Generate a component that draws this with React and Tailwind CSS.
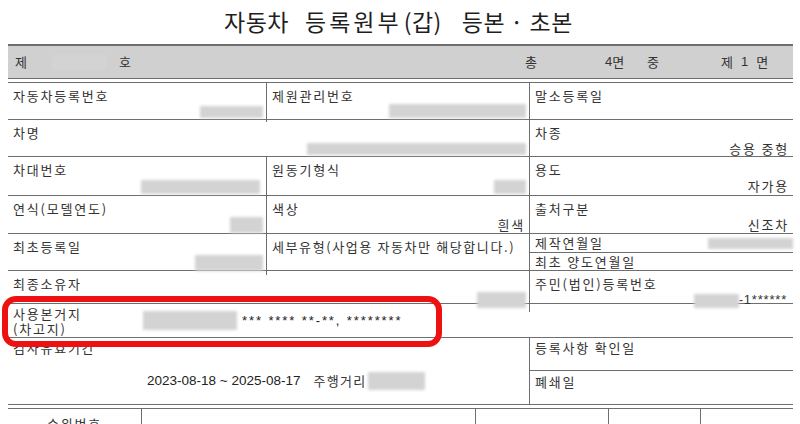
import React from "react";

const ln = "border-[#6e6e6e]";

function Blur({ w, h = 13, className = "" }) {
  return <div className={`bg-[#d3d3d3] blur-[1.5px] ${className}`} style={{ width: w, height: h }} />;
}

function Cell({ label, children, className = "" }) {
  return (
    <div className={`flex flex-col justify-between px-[5px] pt-[5px] pb-[4px] ${className}`}>
      <div className="leading-[16px]">{label}</div>
      <div className="flex items-end justify-end leading-[16px]">{children}</div>
    </div>
  );
}

export default function App() {
  return (
    <div className="h-[424px] w-[800px] overflow-hidden bg-white font-['Noto_Sans_CJK_KR',sans-serif] text-[13px] text-[#333]">
      {/* title */}
      <div className="flex h-[44px] items-center pb-[1px] pl-[224px] text-[23px] tracking-[0.5px] text-[#1e1e1e]">
        <span>자동차</span>
        <span className="ml-[16px] tracking-[3px]">등록원부</span>
        <span className="ml-[2px]">(갑)</span>
        <span className="ml-[20px]">등본</span>
        <span className="ml-[5px]">·</span>
        <span className="ml-[6px]">초본</span>
      </div>

      <div className="ml-[8px] w-[785px]">
        {/* header bar */}
        <div className={`flex h-[35px] items-center border-t-2 border-b bg-[#d0d0d0] ${ln}`}>
          <span className="ml-[7px]">제</span>
          <Blur w={55} h={15} className="ml-[25px]" />
          <span className="ml-[12px]">호</span>
          <span className="ml-[394px]">총</span>
          <span className="ml-[68px] font-['Liberation_Sans',sans-serif]">4</span>
          <span>면</span>
          <span className="ml-[23px]">중</span>
          <span className="ml-[62px]">제</span>
          <span className="ml-[8px] font-['Liberation_Sans',sans-serif]">1</span>
          <span className="ml-[8px]">면</span>
        </div>
        <div className={`h-[4px] border-b ${ln}`} />

        {/* row 1 */}
        <div className={`grid h-[37px] grid-cols-[259px_263px_263px] border-b tracking-[1.8px] ${ln}`}>
          <Cell label="자동차등록번호" className={`border-r pr-[3px] ${ln}`}>
            <Blur w={63} h={12} />
          </Cell>
          <Cell label="제원관리번호" className={`border-r pr-[3px] ${ln}`}>
            <Blur w={137} h={14} />
          </Cell>
          <Cell label="말소등록일" />
        </div>

        {/* row 2 */}
        <div className={`grid h-[37px] grid-cols-[259px_263px_263px] border-b tracking-[1.8px] ${ln}`}>
          <Cell label="차명" className={`col-span-2 border-r pr-[3px] ${ln}`}>
            <Blur w={219} h={12} className="mb-[2px]" />
          </Cell>
          <Cell label="차종" className="pr-[4px]">승용 중형</Cell>
        </div>

        {/* row 3 */}
        <div className={`grid h-[39px] grid-cols-[259px_263px_263px] border-b tracking-[1.8px] ${ln}`}>
          <Cell label="차대번호" className={`border-r pr-[6px] ${ln}`}>
            <Blur w={119} h={14} />
          </Cell>
          <Cell label="원동기형식" className={`border-r pr-[3px] ${ln}`}>
            <Blur w={32} h={14} />
          </Cell>
          <Cell label="용도" className="pr-[4px]">자가용</Cell>
        </div>

        {/* row 4 */}
        <div className={`grid h-[38px] grid-cols-[259px_263px_263px] border-b tracking-[1.8px] ${ln}`}>
          <Cell label="연식(모델연도)" className={`border-r pr-[3px] ${ln}`}>
            <Blur w={33} h={16} />
          </Cell>
          <Cell label="색상" className={`border-r pr-[4px] ${ln}`}>흰색</Cell>
          <Cell label="출처구분" className="pr-[4px]">신조차</Cell>
        </div>

        {/* row 5 */}
        <div className={`grid h-[37px] grid-cols-[259px_263px_263px] border-b tracking-[1.8px] ${ln}`}>
          <Cell label="최초등록일" className={`border-r pr-[3px] pb-[2px] ${ln}`}>
            <Blur w={68} h={16} />
          </Cell>
          <Cell label="세부유형(사업용 자동차만 해당합니다.)" className={`border-r pt-[2px] tracking-[1.6px] ${ln}`} />
          <div className="flex flex-col">
            <div className={`flex h-[19px] items-center justify-between border-b pl-[5px] ${ln}`}>
              <span className="leading-[16px]">제작연월일</span>
              <Blur w={85} h={11} />
            </div>
            <div className="flex h-[17px] items-center pl-[5px] leading-[16px]">최초 양도연월일</div>
          </div>
        </div>

        {/* row 6 */}
        <div className={`grid h-[33px] grid-cols-[259px_263px_263px] border-b tracking-[1.8px] ${ln}`}>
          <Cell label="최종소유자" className={`col-span-2 border-r pt-[2px] pr-[3px] pb-[2px] ${ln}`}>
            <Blur w={49} h={16} />
          </Cell>
          <Cell label="주민(법인)등록번호" className="pt-[2px] pb-[1px] pr-[6px]">
            <Blur w={45} h={14} />
            <span className="font-['Liberation_Sans',sans-serif] text-[13px] tracking-[0.8px]">-1******</span>
          </Cell>
        </div>

        {/* row 7 */}
        <div className={`relative flex h-[34px] items-center border-b tracking-[1.8px] ${ln}`}>
          <div className="w-[135px] pl-[5px] leading-[15px]">
            <div>사용본거지</div>
            <div>(차고지)</div>
          </div>
          <Blur w={94} h={19} />
          <span className="ml-[5px] font-['Liberation_Sans',sans-serif] text-[13px] tracking-[1.9px] text-[#222]">
            *** **** **-**, ********
          </span>
          <div className="absolute left-[-6px] top-[-8px] z-10 h-[51px] w-[440px] rounded-[14px] border-[6px] border-[#ee1111]" />
        </div>

        {/* row 8 */}
        <div className={`grid h-[67px] grid-cols-[259px_263px_263px] border-b tracking-[1.8px] ${ln}`}>
          <div className={`col-span-2 flex flex-col border-r pl-[5px] pt-[2px] ${ln}`}>
            <div className="leading-[16px]">검사유효기간</div>
            <div className="mt-[15px] flex items-center pl-[134px]">
              <span className="font-['Liberation_Sans',sans-serif] text-[13.5px] tracking-normal text-[#222]">
                2023-08-18 ~ 2025-08-17
              </span>
              <span className="ml-[13px] tracking-[1.3px]">주행거리</span>
              <Blur w={57} h={18} className="ml-[1px]" />
            </div>
          </div>
          <div className="flex flex-col">
            <div className={`h-[33px] border-b pl-[5px] pt-[2px] leading-[16px] ${ln}`}>등록사항 확인일</div>
            <div className="pl-[5px] pt-[3px] leading-[16px]">폐쇄일</div>
          </div>
        </div>
        <div className={`h-[4px] border-b ${ln}`} />

        {/* bottom row */}
        <div className="grid h-[30px] grid-cols-[134px_334px_133px_92px_92px] tracking-[1.8px]">
          <div className={`border-r pt-[5px] text-center ${ln}`}>순위번호</div>
          <div className={`border-r ${ln}`} />
          <div className={`border-r ${ln}`} />
          <div className={`border-r ${ln}`} />
          <div />
        </div>
      </div>
    </div>
  );
}
